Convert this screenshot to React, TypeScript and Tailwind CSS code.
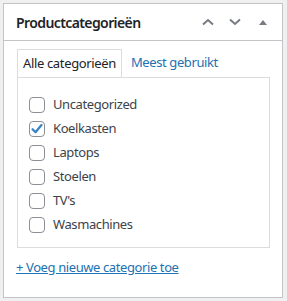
import React from 'react'

const cats = [
  { name: 'Uncategorized', checked: false },
  { name: 'Koelkasten', checked: true },
  { name: 'Laptops', checked: false },
  { name: 'Stoelen', checked: false },
  { name: "TV's", checked: false },
  { name: 'Wasmachines', checked: false },
]

function Checkbox({ checked }: { checked: boolean }) {
  return (
    <span className="w-4 h-4 flex-shrink-0 rounded-[4px] border border-[#8c8f94] bg-white flex items-center justify-center">
      {checked && (
        <svg width="14" height="14" viewBox="0 0 14 14">
          <path d="M2.5 7.2l3 3 6-7.2" stroke="#3582c4" strokeWidth="2.2" fill="none" strokeLinecap="round" strokeLinejoin="round" />
        </svg>
      )}
    </span>
  )
}

export default function App() {
  return (
    <div className="min-h-[301px] w-[287px] bg-[#f0f0f1] pt-[3px] pl-[3px]" style={{ fontFamily: '"Noto Sans", sans-serif' }}>
      <div className="w-[280px] h-[295px] border border-[#c3c4c7] bg-white">

        {/* Header */}
        <div className="h-[37px] border-b border-[#c3c4c7] flex items-center pl-3 pr-2">
          <h2 className="flex-1 text-[14px] font-semibold text-[#1d2327] tracking-[-0.6px]">Productcategorieën</h2>
          <svg width="14" height="10" viewBox="0 0 14 10" className="mr-[13px]">
            <path d="M2 7.5L7 3l5 4.5" stroke="#787c82" strokeWidth="2" fill="none" />
          </svg>
          <svg width="14" height="10" viewBox="0 0 14 10" className="mr-[16px]">
            <path d="M2 2.5L7 7l5-4.5" stroke="#787c82" strokeWidth="2" fill="none" />
          </svg>
          <svg width="10" height="8" viewBox="0 0 10 8" className="mr-[6px]">
            <path d="M1 7L5 2l4 5z" fill="#787c82" />
          </svg>
        </div>

        {/* Tabs */}
        <div className="px-3 pt-[8px]">
          <div className="flex text-[13px] pl-px">
            <div className="h-[28px] px-[5px] border border-b-0 border-[#dcdcde] bg-white text-[#1d2327] flex items-center relative -mb-px z-10 tracking-[-0.35px]">
              Alle categorieën
            </div>
            <div className="h-[28px] px-[9px] text-[#2271b1] flex items-center tracking-[-0.4px]">Meest gebruikt</div>
          </div>
          <div className="ml-px w-[253px] h-[171px] border border-[#dcdcde] pt-[15px] pl-[11px]">
            {cats.map(c => (
              <label key={c.name} className="h-[24px] flex items-center gap-[8px] text-[13px] text-[#3c434a] tracking-[-0.4px]">
                <Checkbox checked={c.checked} />
                {c.name}
              </label>
            ))}
          </div>
          <a href="#" className="inline-block mt-[10px] text-[13px] text-[#2271b1] underline tracking-[-0.4px]">
            + Voeg nieuwe categorie toe
          </a>
        </div>

      </div>
    </div>
  )
}
